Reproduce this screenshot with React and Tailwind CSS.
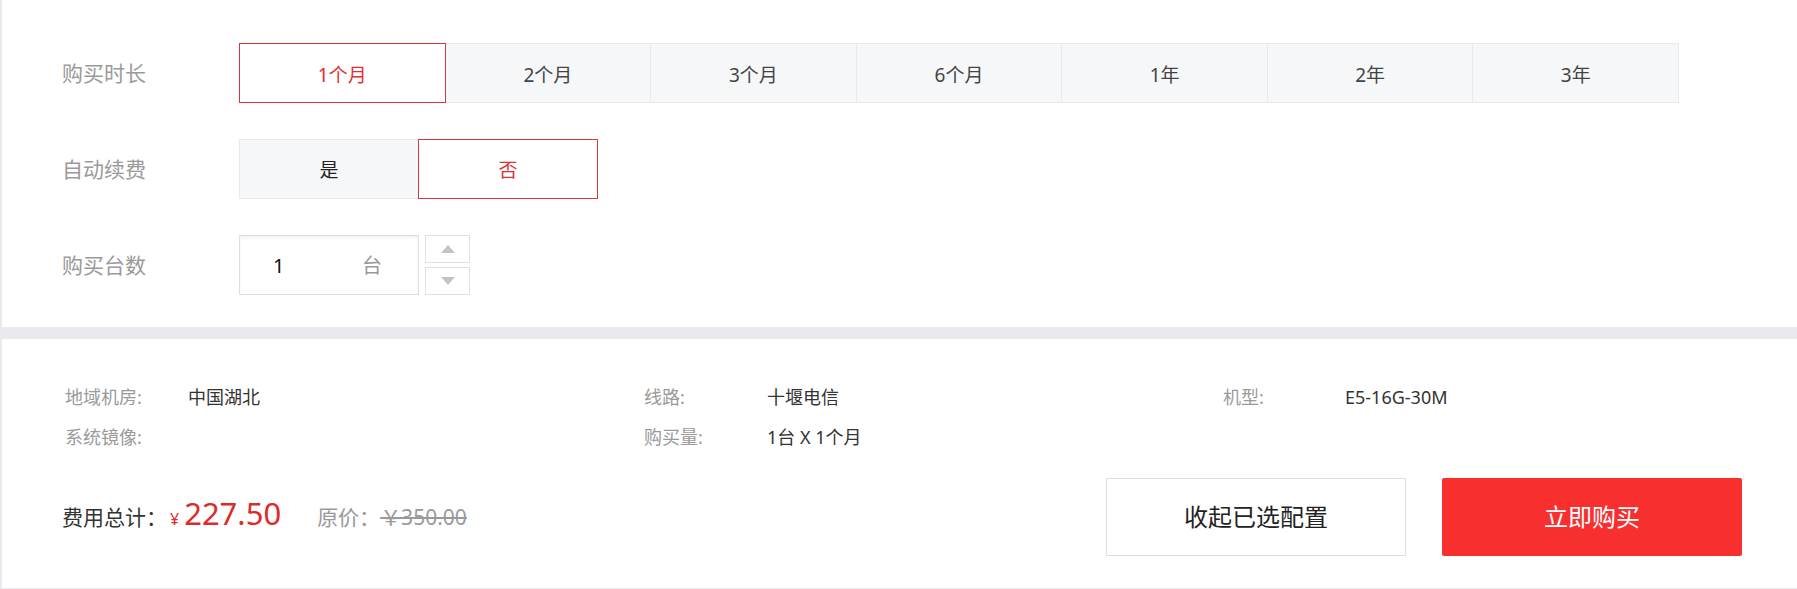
export default function App() {
  const durations = ["1个月", "2个月", "3个月", "6个月", "1年", "2年", "3年"];
  return (
    <div className="w-[1797px] h-[589px] bg-[#e9eaed] pl-[2px] flex flex-col font-['Noto_Sans','Noto_Sans_CJK_SC',sans-serif]">
      {/* top config panel */}
      <div className="bg-white h-[327px] pt-[43px] pl-[60px] flex flex-col gap-[36px]">
        <div className="flex items-center h-[60px]">
          <div className="w-[177px] text-[21px] text-[#9a9a9a] leading-none">购买时长</div>
          <div className="flex w-[1440px]">
            {durations.map((d, i) => (
              <div
                key={d}
                className={
                  i === 0
                    ? "flex-1 h-[60px] pt-[5px] flex items-center justify-center text-[19px] leading-none border border-[#d9363e] bg-white text-[#df3033] relative z-10"
                    : "flex-1 h-[60px] pt-[5px] -ml-px flex items-center justify-center text-[19px] leading-none border border-[#e6e9ee] bg-[#f6f7f9] text-[#444]"
                }
              >
                {d}
              </div>
            ))}
          </div>
        </div>

        <div className="flex items-center h-[60px]">
          <div className="w-[177px] text-[21px] text-[#9a9a9a] leading-none">自动续费</div>
          <div className="flex">
            <div className="w-[180px] h-[60px] pt-[2px] flex items-center justify-center text-[19px] leading-none border border-[#e6e9ee] bg-[#f6f7f9] text-[#222]">
              是
            </div>
            <div className="w-[180px] h-[60px] pt-[2px] -ml-px flex items-center justify-center text-[19px] leading-none border border-[#d9363e] bg-white text-[#df3033] relative z-10">
              否
            </div>
          </div>
        </div>

        <div className="flex items-center h-[60px]">
          <div className="w-[177px] text-[21px] text-[#9a9a9a] leading-none">购买台数</div>
          <div className="w-[180px] h-[60px] pt-[2px] border border-[#dedede] bg-white shadow-[inset_0_2px_3px_rgba(0,0,0,0.06)] flex items-center justify-between pl-[33px] pr-[36px]">
            <span className="text-[20px] text-[#111] leading-none">1</span>
            <span className="text-[20px] text-[#999] leading-none">台</span>
          </div>
          <div className="ml-[6px] flex flex-col gap-[4px]">
            <div className="w-[45px] h-[28px] border border-[#e0e0e0] bg-white flex items-center justify-center">
              <svg width="14" height="8" viewBox="0 0 14 8">
                <path d="M7 0 L14 8 L0 8 Z" fill="#c4c4c4" />
              </svg>
            </div>
            <div className="w-[45px] h-[28px] border border-[#e0e0e0] bg-white flex items-center justify-center">
              <svg width="14" height="8" viewBox="0 0 14 8">
                <path d="M0 0 L14 0 L7 8 Z" fill="#c4c4c4" />
              </svg>
            </div>
          </div>
        </div>
      </div>

      {/* bottom summary panel */}
      <div className="mt-[12px] bg-white h-[249px] pt-[38px] flex flex-col">
        <div className="pl-[63px] grid grid-cols-[579px_579px_579px] text-[18px] leading-none">
          <div className="flex items-center h-[40px]">
            <span className="w-[123px] text-[#9a9a9a]">地域机房:</span>
            <span className="text-[#333]">中国湖北</span>
          </div>
          <div className="flex items-center h-[40px]">
            <span className="w-[123px] text-[#9a9a9a]">线路:</span>
            <span className="text-[#333]">十堰电信</span>
          </div>
          <div className="flex items-center h-[40px]">
            <span className="w-[122px] text-[#9a9a9a]">机型:</span>
            <span className="text-[#333]">E5-16G-30M</span>
          </div>
          <div className="flex items-center h-[40px]">
            <span className="w-[123px] text-[#9a9a9a]">系统镜像:</span>
            <span className="text-[#333]"></span>
          </div>
          <div className="flex items-center h-[40px]">
            <span className="w-[123px] text-[#9a9a9a]">购买量:</span>
            <span className="text-[#333]">1台 X 1个月</span>
          </div>
          <div className="flex items-center h-[40px]"></div>
        </div>

        <div className="mt-[21px] h-[78px] flex items-center pl-[60px] pr-[55px]">
          <div className="flex items-baseline leading-none pb-[8px]">
            <span className="text-[21px] text-[#333]">费用总计：</span>
            <span className="ml-[3px] text-[16px] text-[#e02a2a]">¥</span>
            <span className="ml-[5px] text-[31px] text-[#e02a2a]">227.50</span>
            <span className="ml-[36px] text-[21px] text-[#9a9a9a]">原价：</span>
            <span className="text-[21px] text-[#9a9a9a] line-through">￥350.00</span>
          </div>
          <div className="ml-auto flex gap-[36px]">
            <div className="w-[300px] h-[78px] border border-[#dedede] bg-white flex items-center justify-center text-[24px] text-[#222] leading-none">
              收起已选配置
            </div>
            <div className="w-[300px] h-[78px] bg-[#f82f2f] rounded-[2px] flex items-center justify-center text-[24px] text-white leading-none">
              立即购买
            </div>
          </div>
        </div>
      </div>
    </div>
  );
}
